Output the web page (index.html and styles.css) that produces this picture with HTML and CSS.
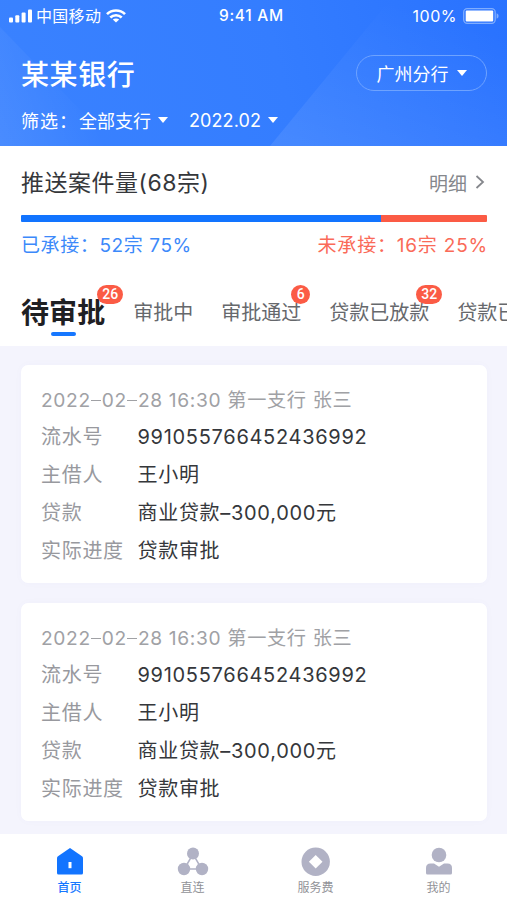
FILE: index.html
```html
<!DOCTYPE html>
<html lang="zh-CN">
<head>
<meta charset="utf-8">
<meta name="viewport" content="width=device-width, initial-scale=1">
<title>某某银行</title>
<link rel="stylesheet" href="styles.css">
</head>
<body>
<div class="app">
  <header class="header">
    <svg class="facets" width="507" height="146" viewBox="0 0 507 146">
      <defs>
        <linearGradient id="left" x1="0" y1="1" x2="1" y2=".6"><stop offset="0" stop-color="#fff" stop-opacity=".06"/><stop offset="0" stop-color="#fff" stop-opacity=".08"/><stop offset=".8" stop-color="#fff" stop-opacity="0"/></linearGradient>
        <linearGradient id="right" x1="0" y1="1" x2=".5" y2="0"><stop offset="0" stop-color="#fff" stop-opacity=".09"/><stop offset="1" stop-color="#fff" stop-opacity="0"/></linearGradient>
      </defs>
      <path d="M0 27 115 146H0Z" fill="url(#left)"/>
      <path d="M270 146 390 0H507V146Z" fill="url(#right)"/>
    </svg>
    <div class="status">
      <div class="status-left">
        <svg class="signal" width="24" height="14" viewBox="0 0 24 14" fill="#fff"><rect x="0" y="8.500" width="4" height="5" rx="1"/><rect x="6.300" y="6.300" width="4" height="7.200" rx="1"/><rect x="12.600" y="3.600" width="4" height="9.900" rx="1"/><rect x="19" y="0.500" width="4" height="13" rx="1"/></svg>
        <span class="carrier">中国移动</span>
        <svg class="wifi" width="20" height="14" viewBox="0 0 20 14" fill="none" stroke="#fff" stroke-width="2.700"><path d="M1 5.100C6 .3 14 .3 19 5.100"/><path d="M4.300 8.500C7.500 5.500 12.500 5.500 15.700 8.500"/><path d="M10 13.500 6.800 10.500C8.600 9 11.400 9 13.200 10.500Z" fill="#fff" stroke="none"/></svg>
      </div>
      <span class="time">9:41 AM</span>
      <div class="status-right">
        <span class="percent">100%</span>
        <svg width="36" height="16" viewBox="0 0 36 16"><rect x=".7" y=".7" width="31.500" height="14.600" rx="3.500" fill="none" stroke="#7fadff" stroke-width="1.300"/><rect x="2.700" y="2.600" width="27.500" height="10.800" rx="1" fill="#fff"/><path d="M33.600 5.300q2 .7 2 2.700t-2 2.700z" fill="#7fadff"/></svg>
      </div>
    </div>
    <div class="title-row">
      <h1 class="bank">某某银行</h1>
      <button class="branch">广州分行<i class="caret"></i></button>
    </div>
    <div class="filters">
      <span class="filter-label">筛选：</span>
      <span class="filter">全部支行<i class="caret"></i></span>
      <span class="filter month">2022.02<i class="caret"></i></span>
    </div>
  </header>

  <section class="summary">
    <div class="summary-head">
      <h2 class="summary-title">推送案件量(68宗)</h2>
      <a class="detail">明细<svg width="10" height="14" viewBox="0 0 10 14" fill="none" stroke="#85878c" stroke-width="1.800"><path d="M1.500 1 8 7 1.500 13"/></svg></a>
    </div>
    <div class="bar"><div class="bar-done"></div><div class="bar-rest"></div></div>
    <div class="legend"><span class="done">已承接：52宗 75%</span><span class="rest">未承接：16宗 25%</span></div>
  </section>

  <nav class="tabs">
    <a class="tab active">待审批<b class="badge">26</b></a>
    <a class="tab">审批中</a>
    <a class="tab">审批通过<b class="badge single">6</b></a>
    <a class="tab">贷款已放款<b class="badge">32</b></a>
    <a class="tab">贷款已</a>
  </nav>

  <main class="list">
    <article class="card">
      <div class="meta">2022<s></s>02<s></s>28 16:30 第一支行 张三</div>
      <dl class="rows">
        <dt>流水号</dt><dd class="serial">991055766452436992</dd>
        <dt>主借人</dt><dd>王小明</dd>
        <dt>贷款</dt><dd>商业贷款–300,000元</dd>
        <dt>实际进度</dt><dd>贷款审批</dd>
      </dl>
    </article>
    <article class="card">
      <div class="meta">2022<s></s>02<s></s>28 16:30 第一支行 张三</div>
      <dl class="rows">
        <dt>流水号</dt><dd class="serial">991055766452436992</dd>
        <dt>主借人</dt><dd>王小明</dd>
        <dt>贷款</dt><dd>商业贷款–300,000元</dd>
        <dt>实际进度</dt><dd>贷款审批</dd>
      </dl>
    </article>
  </main>

  <footer class="tabbar">
    <a class="item on"><svg width="32" height="30" viewBox="0 0 32 30"><path d="M16 0 28 8.300Q29 9 29 10.300V25Q29 26.500 27.500 26.500H4.500Q3 26.500 3 25V10.300Q3 9 4 8.300Z" fill="#1274ff"/><rect x="14.500" y="14" width="3" height="6.200" fill="#fff"/></svg><span>首页</span></a>
    <a class="item"><svg width="32" height="30" viewBox="0 0 32 30" fill="#b1b2c5"><path d="M16 6 7.300 21H24.700Z" fill="none" stroke="#b1b2c5" stroke-width="1.500"/><circle cx="16" cy="5.500" r="6"/><circle cx="7" cy="21" r="6.200"/><circle cx="25" cy="21" r="6.200"/></svg><span>直连</span></a>
    <a class="item"><svg width="32" height="30" viewBox="0 0 32 30"><circle cx="15.700" cy="13.800" r="14.200" fill="#b1b2c5"/><path d="M15.700 7 22.500 13.800 15.700 20.600 8.900 13.800Z" fill="#fff"/></svg><span>服务费</span></a>
    <a class="item"><svg width="32" height="30" viewBox="0 0 32 30" fill="#b1b2c5"><circle cx="16" cy="7" r="7.300"/><path d="M3 20Q3 15.500 7.500 15.500H11L16 18.700 21 15.500H24.500Q29 15.500 29 20V25Q29 26.500 27.500 26.500H4.500Q3 26.500 3 25Z"/></svg><span>我的</span></a>
  </footer>
</div>
</body>
</html>
```
FILE: styles.css
```css
* { box-sizing: border-box; margin: 0; padding: 0; }
body {
  width: 507px; height: 900px; overflow: hidden;
  font-family: Inter, "Noto Sans CJK SC", sans-serif;
  background: #f4f4fd;
}
.app { height: 900px; display: flex; flex-direction: column; overflow: hidden; }
svg { display: block; flex: none; overflow: visible; }
.caret { flex: none; border: 5px solid transparent; border-top: 6px solid #fff; border-bottom: 0; }

.header {
  position: relative; z-index: 0; height: 146px; flex: none; color: #fff;
  background: linear-gradient(75deg, #3a82ff, #347dff 55%, #2972ff);
}
.facets { position: absolute; inset: 0; z-index: -1; }
.status {
  height: 30px; display: grid; grid-template-columns: 210px auto 1fr; align-items: center;
  padding: 0 8px 0 9px; font-size: 16px; line-height: 30px;
}
.status-left { display: flex; align-items: center; }
.carrier { margin: 0 5px 0 3px; letter-spacing: .3px; }
.time { font-weight: 500; font-size: 15.500px; letter-spacing: .7px; padding-top: 1px; }
.status-right { display: flex; align-items: center; justify-content: flex-end; gap: 6px; }
.percent { font-size: 16px; letter-spacing: .5px; }
.title-row { display: flex; justify-content: space-between; align-items: center; height: 36px; margin: 25px 20px 0 21px; }
.bank { font-size: 28px; line-height: 36px; font-weight: 500; letter-spacing: .6px; padding-top: 3px; }
.branch {
  width: 131px; height: 36px; border: 1px solid #6ea3ff; border-radius: 18px;
  background: none; color: #fff; font: inherit; font-size: 18px;
  display: flex; align-items: center; justify-content: center; gap: 8px;
}
.filters { display: flex; align-items: center; height: 30px; margin: 14px 21px 0; font-size: 18px; }
.filter-label { width: 58px; letter-spacing: 1px; white-space: nowrap; }
.filter { display: flex; align-items: center; gap: 7px; }
.month { margin-left: 21px; letter-spacing: .1px; }

.summary { height: 130px; flex: none; padding: 17px 20px 0 21px; background: #fff; }
.summary-head { display: flex; align-items: center; justify-content: space-between; height: 38px; }
.summary-title { font-size: 23px; line-height: 34px; font-weight: 400; color: #35373b; letter-spacing: .5px; padding-top: 1px; }
.detail { display: flex; align-items: center; gap: 8px; margin-right: 2px; font-size: 19px; color: #85878c; }
.bar { display: flex; height: 7px; margin-top: 14px; border-radius: 1px; overflow: hidden; }
.bar-done { width: 360px; background: #1274ff; }
.bar-rest { flex: 1; background: #fb5b45; }
.legend { display: flex; justify-content: space-between; font-size: 19px; line-height: 28px; margin-top: 10px; letter-spacing: .6px; }
.done { color: #3c89fa; }
.rest { color: #fa6a58; margin-right: -1px; letter-spacing: .8px; }

.tabs { height: 70px; flex: none; display: flex; gap: 28px; padding: 18px 0 0 21px; background: #fff; overflow: hidden; }
.tab { position: relative; height: 38px; flex: none; white-space: nowrap; font-size: 20px; line-height: 38px; color: #66686c; }
.active { font-size: 28px; font-weight: 700; color: #1f2023; letter-spacing: .1px; }
.active::after { content: ""; position: absolute; left: 30px; bottom: -4px; width: 25px; height: 4px; border-radius: 2px; background: #1677ff; }
.badge {
  position: absolute; right: -18px; top: -9px; width: 26px; height: 19px; border-radius: 10px;
  background: #fb5b45; color: #fff; font: 500 14px/19px Roboto, sans-serif; letter-spacing: 0; text-align: center;
}
.tab:not(.active) .badge { right: -13px; }
.tab:not(.active) .badge.single { width: 19px; right: -9px; }

.list { flex: 1; min-height: 0; padding: 19px 20px 0 21px; overflow: hidden; }
.card { height: 218px; padding: 16px 20px; margin-bottom: 20px; border-radius: 7px; background: #fff; box-shadow: 0 0 10px rgba(90,90,160,.025); }
.meta { height: 38px; line-height: 38px; font-size: 19.200px; letter-spacing: .65px; color: #a0a1a5; white-space: nowrap; }
.meta s { display: inline-block; width: 10px; height: 1.500px; margin: 0 1px 6px 0; background: #a0a1a5; vertical-align: baseline; }
.rows { display: grid; grid-template-columns: 96.500px 1fr; grid-auto-rows: 38px; line-height: 38px; font-size: 20px; letter-spacing: .7px; margin-top: -1px; }
.rows dt { color: #98999e; }
.rows dd { color: #35373b; white-space: nowrap; }

.tabbar { height: 66px; flex: none; display: grid; grid-template-columns: repeat(4, 123px); padding: 14px 0 0 8px; background: #fff; }
.item { display: flex; flex-direction: column; align-items: center; font-size: 12px; line-height: 18px; color: #919297; }
.item span { margin-top: 1px; }
.on { color: #1677ff; font-weight: 500; }
```
